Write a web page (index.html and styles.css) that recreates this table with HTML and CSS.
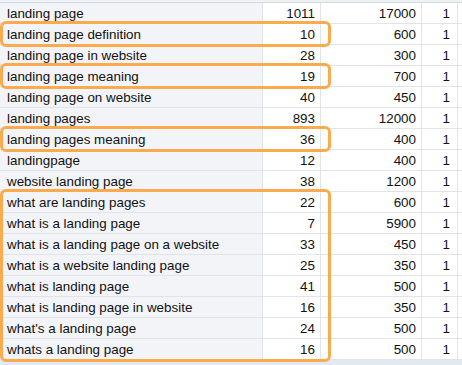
FILE: index.html
```html
<!DOCTYPE html>
<html>
<head>
<meta charset="utf-8">
<link rel="stylesheet" href="styles.css">
</head>
<body>
<div class="sheet">
  <div class="top-strip"></div>
  <div class="grid">
    <div class="row"><div class="c a">landing page</div><div class="c b">1011</div><div class="c cc">17000</div><div class="c d">1</div><div class="c e"></div></div>
    <div class="row"><div class="c a">landing page definition</div><div class="c b">10</div><div class="c cc">600</div><div class="c d">1</div><div class="c e"></div></div>
    <div class="row"><div class="c a">landing page in website</div><div class="c b">28</div><div class="c cc">300</div><div class="c d">1</div><div class="c e"></div></div>
    <div class="row"><div class="c a">landing page meaning</div><div class="c b">19</div><div class="c cc">700</div><div class="c d">1</div><div class="c e"></div></div>
    <div class="row"><div class="c a">landing page on website</div><div class="c b">40</div><div class="c cc">450</div><div class="c d">1</div><div class="c e"></div></div>
    <div class="row"><div class="c a">landing pages</div><div class="c b">893</div><div class="c cc">12000</div><div class="c d">1</div><div class="c e"></div></div>
    <div class="row"><div class="c a">landing pages meaning</div><div class="c b">36</div><div class="c cc">400</div><div class="c d">1</div><div class="c e"></div></div>
    <div class="row"><div class="c a">landingpage</div><div class="c b">12</div><div class="c cc">400</div><div class="c d">1</div><div class="c e"></div></div>
    <div class="row"><div class="c a">website landing page</div><div class="c b">38</div><div class="c cc">1200</div><div class="c d">1</div><div class="c e"></div></div>
    <div class="row"><div class="c a">what are landing pages</div><div class="c b">22</div><div class="c cc">600</div><div class="c d">1</div><div class="c e"></div></div>
    <div class="row"><div class="c a">what is a landing page</div><div class="c b">7</div><div class="c cc">5900</div><div class="c d">1</div><div class="c e"></div></div>
    <div class="row"><div class="c a">what is a landing page on a website</div><div class="c b">33</div><div class="c cc">450</div><div class="c d">1</div><div class="c e"></div></div>
    <div class="row"><div class="c a">what is a website landing page</div><div class="c b">25</div><div class="c cc">350</div><div class="c d">1</div><div class="c e"></div></div>
    <div class="row"><div class="c a">what is landing page</div><div class="c b">41</div><div class="c cc">500</div><div class="c d">1</div><div class="c e"></div></div>
    <div class="row"><div class="c a">what is landing page in website</div><div class="c b">16</div><div class="c cc">350</div><div class="c d">1</div><div class="c e"></div></div>
    <div class="row"><div class="c a">what's a landing page</div><div class="c b">24</div><div class="c cc">500</div><div class="c d">1</div><div class="c e"></div></div>
    <div class="row"><div class="c a">whats a landing page</div><div class="c b">16</div><div class="c cc">500</div><div class="c d">1</div><div class="c e"></div></div>
  </div>
  <div class="bottom-strip"></div>
  <div class="hl hl-1"></div>
  <div class="hl hl-2"></div>
  <div class="hl hl-3"></div>
  <div class="hl hl-4"></div>
</div>
</body>
</html>
```

FILE: styles.css
```css
html, body {
  margin: 0;
  padding: 0;
  background: #ffffff;
}
.sheet {
  position: relative;
  width: 462px;
  height: 365px;
  overflow: hidden;
  font-family: "Liberation Sans", Arial, sans-serif;
  font-size: 13.4px;
  color: #111111;
}
.top-strip {
  height: 2px;
  background: #eef1f5;
  border-bottom: 1px solid #d6dadf;
}
.row {
  display: grid;
  grid-template-columns: 263px 58px 101px 36px 1fr;
  height: 21px;
}
.c {
  box-sizing: border-box;
  height: 21px;
  border-bottom: 1px solid #e1e3e6;
  border-right: 1px solid #e1e3e6;
  line-height: 21px;
  white-space: nowrap;
  overflow: hidden;
}
.a {
  background: #f2f4f8;
  padding-left: 7px;
}
.b, .cc, .d {
  text-align: right;
  padding-right: 5px;
}
.d {
  padding-right: 7px;
}
.e {
  border-right: none;
}
.bottom-strip {
  height: 6px;
  background: #e3e9f0;
}
.hl {
  position: absolute;
  left: 0;
  width: 331px;
  box-sizing: border-box;
  border: 3px solid #fbab4e;
  border-radius: 6px;
}
.hl-1 { top: 21px; height: 26px; }
.hl-2 { top: 63px; height: 26px; }
.hl-3 { top: 126px; height: 26px; }
.hl-4 { top: 189px; height: 173px; }
```
